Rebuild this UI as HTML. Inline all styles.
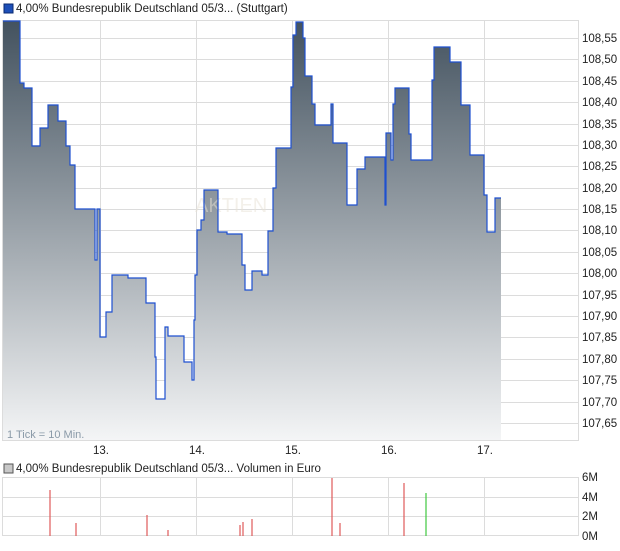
<!DOCTYPE html>
<html><head><style>
body{margin:0;background:#fff;width:620px;height:546px;overflow:hidden;font-family:"Liberation Sans",sans-serif;}
</style></head><body>
<svg width="620" height="546" xmlns="http://www.w3.org/2000/svg" font-family="Liberation Sans, sans-serif">
<defs><linearGradient id="g" x1="0" x2="0" y1="21" y2="440" gradientUnits="userSpaceOnUse">
<stop offset="0" stop-color="#43525f"/><stop offset="1" stop-color="#f4f5f6"/></linearGradient></defs>
<rect x="4" y="4" width="9" height="9" fill="#1d4fb8" stroke="#0a2a70"/>
<text x="16" y="12" font-size="11.5" fill="#222">4,00% Bundesrepublik Deutschland 05/3... (Stuttgart)</text>
<g stroke="#dcdcdc" stroke-width="1" fill="none">
<rect x="2.5" y="20.5" width="576" height="420"/>
<path d="M100.5 20V441M196.5 20V441M292.5 20V441M388.5 20V441M484.5 20V441"/>
<path d="M2 38.5H578M2 59.5H578M2 81.5H578M2 102.5H578M2 124.5H578M2 145.5H578M2 166.5H578M2 188.5H578M2 209.5H578M2 230.5H578M2 252.5H578M2 273.5H578M2 295.5H578M2 316.5H578M2 337.5H578M2 359.5H578M2 380.5H578M2 402.5H578M2 423.5H578"/>
</g>
<path d="M3 21H20V83H24V88H32V146H40V128H48V105H58V121H66V146H70V165H75V209H95V260H97V209H100V337H106V312H112V275H128V278H146V303H155V357H156V399H165V327H168V336H184V362H192V380H194V320H195V275H197V230H201V220H204V190H218V232H227V234H242V265H245V290H252V271H262V275H268V231H273V188H276V148H291V87H293V35H296V22H303V38H305V76H312V104H315V125H331V104H333V143H347V205H357V169H365V157H385V205H386V133H391V160H393V104H395V88H409V134H411V160H432V80H434V47H450V62H461V105H470V155H484V195H487V232H495V198H501V440H3Z" fill="url(#g)"/>
<text x="195" y="212" font-size="20" fill="#e8e2d6" opacity="0.5">AKTIEN</text>
<path d="M3 21H20V83H24V88H32V146H40V128H48V105H58V121H66V146H70V165H75V209H95V260H97V209H100V337H106V312H112V275H128V278H146V303H155V357H156V399H165V327H168V336H184V362H192V380H194V320H195V275H197V230H201V220H204V190H218V232H227V234H242V265H245V290H252V271H262V275H268V231H273V188H276V148H291V87H293V35H296V22H303V38H305V76H312V104H315V125H331V104H333V143H347V205H357V169H365V157H385V205H386V133H391V160H393V104H395V88H409V134H411V160H432V80H434V47H450V62H461V105H470V155H484V195H487V232H495V198H501" fill="none" stroke="#1e50d0" stroke-width="1.2"/>
<g font-size="11.5" fill="#222">
<text x="582" y="42">108,55</text><text x="582" y="63">108,50</text><text x="582" y="85">108,45</text><text x="582" y="106">108,40</text><text x="582" y="128">108,35</text><text x="582" y="149">108,30</text><text x="582" y="170">108,25</text><text x="582" y="192">108,20</text><text x="582" y="213">108,15</text><text x="582" y="234">108,10</text><text x="582" y="256">108,05</text><text x="582" y="277">108,00</text><text x="582" y="299">107,95</text><text x="582" y="320">107,90</text><text x="582" y="341">107,85</text><text x="582" y="363">107,80</text><text x="582" y="384">107,75</text><text x="582" y="406">107,70</text><text x="582" y="427">107,65</text>
<text x="93" y="454">13.</text><text x="189" y="454">14.</text><text x="285" y="454">15.</text><text x="381" y="454">16.</text><text x="477" y="454">17.</text>
</g>
<text x="7" y="438" font-size="11" fill="#8a9aa8">1 Tick = 10 Min.</text>
<rect x="4" y="464" width="9" height="9" fill="#c8c8c8" stroke="#555"/>
<text x="16" y="472" font-size="11.5" fill="#222">4,00% Bundesrepublik Deutschland 05/3... Volumen in Euro</text>
<g stroke="#dcdcdc" fill="none">
<rect x="2.5" y="477.5" width="576" height="58"/>
<path d="M100.5 477V536M196.5 477V536M292.5 477V536M388.5 477V536M484.5 477V536M2 497.5H578M2 516.5H578"/>
</g>
<g stroke="#e05a5a" stroke-width="1.2">
<path d="M50 490V536M76 523V536M147 515V536M168 530V536M240 525V536M243 522V536M252 519V536M332 478V536M340 523V536M404 483V536"/>
</g>
<path d="M426 493V536" stroke="#40c840" stroke-width="1.2"/>
<g font-size="11.5" fill="#222"><text x="582" y="481">6M</text><text x="582" y="501">4M</text><text x="582" y="520">2M</text><text x="582" y="540">0M</text></g>
</svg>
</body></html>
